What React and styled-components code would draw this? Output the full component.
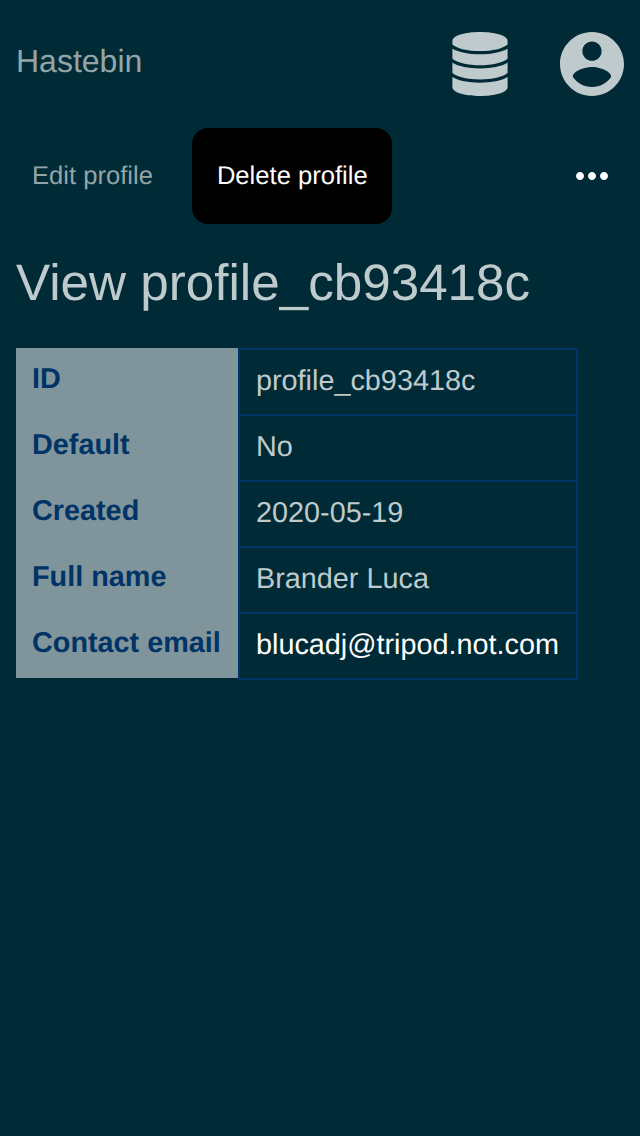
import React from "react";
import styled, { createGlobalStyle } from "styled-components";

const GlobalStyle = createGlobalStyle`
  * { box-sizing: border-box; }
  body {
    margin: 0;
    background: #002b36;
    color: #bfcacd;
    font-family: "Liberation Sans", Arial, sans-serif;
    text-rendering: geometricPrecision;
  }
`;

const Page = styled.div`
  min-height: 1136px;
`;

const Header = styled.header`
  display: flex;
  align-items: center;
  height: 128px;
  padding: 0 16px;
`;

const Brand = styled.a`
  margin: 0 auto 6px 0;
  color: #93a5a9;
  font-size: 32px;
  line-height: 36px;
`;

const HeaderActions = styled.div`
  display: flex;
  align-items: center;
  gap: 52px;
`;

const Icon = styled.svg`
  display: block;
  flex: none;
  width: ${({ $width }) => $width}px;
  height: ${({ $height }) => $height}px;
  fill: currentColor;
`;

const Tabs = styled.nav`
  display: flex;
  align-items: center;
  gap: 23px;
  height: 96px;
  padding: 0 24px 0 16px;
`;

const Tab = styled.a`
  display: flex;
  align-items: center;
  justify-content: center;
  width: ${({ $width }) => $width}px;
  height: 96px;
  border-radius: 16px;
  background: ${({ $active }) => ($active ? "#000" : "transparent")};
  color: ${({ $active }) => ($active ? "#fff" : "#93a5a9")};
  font-size: 25.6px;
  line-height: 30px;
  padding: 0 0 1px ${({ $active }) => ($active ? 0.6 : 0)}px;
  white-space: nowrap;
`;

const MoreButton = styled.button`
  margin: 0 0 0 auto;
  padding: 0;
  border: 0;
  background: none;
  color: #fff;
`;

const Main = styled.main`
  padding: 29px 16px 0;
`;

const Title = styled.h1`
  margin: 0 0 35px;
  font-size: 51.2px;
  font-weight: 400;
  line-height: 60px;
`;

const Details = styled.dl`
  width: 562px;
  margin: 0;
`;

const DetailRow = styled.div`
  display: grid;
  grid-template-columns: 222px 340px;
  height: 66px;
`;

const Label = styled.dt`
  padding: 15px 16px;
  height: 66px;
  background: #80959b;
  color: #003366;
  font-size: 28.8px;
  font-weight: 700;
  line-height: 33px;
  white-space: nowrap;
`;

const Value = styled.dd`
  height: 68px;
  margin: 0;
  padding: 15px 16px;
  border: 2px solid #003366;
  color: ${({ $link }) => ($link ? "#fff" : "inherit")};
  font-size: 28.8px;
  line-height: 33px;
  white-space: nowrap;
`;

const fields = [
  { label: "ID", value: "profile_cb93418c" },
  { label: "Default", value: "No" },
  { label: "Created", value: "2020-05-19" },
  { label: "Full name", value: "Brander Luca" },
  { label: "Contact email", value: "blucadj@tripod.not.com", link: true },
];

export default function App() {
  return (
    <Page>
      <GlobalStyle />
      <Header>
        <Brand>Hastebin</Brand>
        <HeaderActions>
          <Icon $width={56} $height={64} viewBox="0 0 56 64">
            <path d="M.4 9C.4 3.6 12.5 0 28 0S55.6 3.6 55.6 9V12.4C50.5 16.6 40.5 19 28 19S5.5 16.6 .4 12.4Z" />
            <path d="M.4 16.7C6.5 20.2 16.5 22.2 28 22.2S49.5 20.2 55.6 16.7V26.7C50.5 30.8 40.5 33.2 28 33.2S5.5 30.8 .4 26.7Z" />
            <path d="M.4 30.8C6.5 34.4 16.5 36.4 28 36.4S49.5 34.4 55.6 30.8V41C50.5 45 40.5 47.4 28 47.4S5.5 45 .4 41Z" />
            <path d="M.4 45C6.5 48.6 16.5 50.7 28 50.7S49.5 48.6 55.6 45V55C55.6 60.4 43.5 64 28 64S.4 60.4 .4 55Z" />
          </Icon>
          <Icon $width={64} $height={64} viewBox="2 2 20 20">
            <path d="M12 2C6.48 2 2 6.48 2 12s4.48 10 10 10 10-4.48 10-10S17.52 2 12 2zm0 3c1.66 0 3 1.34 3 3s-1.34 3-3 3-3-1.34-3-3 1.34-3 3-3zm0 14.2c-2.5 0-4.71-1.28-6-3.22.03-1.99 4-3.08 6-3.08 1.99 0 5.97 1.09 6 3.08-1.29 1.94-3.5 3.22-6 3.22z" />
          </Icon>
        </HeaderActions>
      </Header>
      <Tabs>
        <Tab $width={153}>Edit profile</Tab>
        <Tab $width={200} $active>Delete profile</Tab>
        <MoreButton aria-label="More">
          <Icon $width={48} $height={48} viewBox="0 0 24 24">
            <path d="M6 10c-1.1 0-2 .9-2 2s.9 2 2 2 2-.9 2-2-.9-2-2-2zm12 0c-1.1 0-2 .9-2 2s.9 2 2 2 2-.9 2-2-.9-2-2-2zm-6 0c-1.1 0-2 .9-2 2s.9 2 2 2 2-.9 2-2-.9-2-2-2z" />
          </Icon>
        </MoreButton>
      </Tabs>
      <Main>
        <Title>View profile_cb93418c</Title>
        <Details>
          {fields.map(({ label, value, link }) => (
            <DetailRow key={label}>
              <Label>{label}</Label>
              <Value $link={link}>{value}</Value>
            </DetailRow>
          ))}
        </Details>
      </Main>
    </Page>
  );
}
